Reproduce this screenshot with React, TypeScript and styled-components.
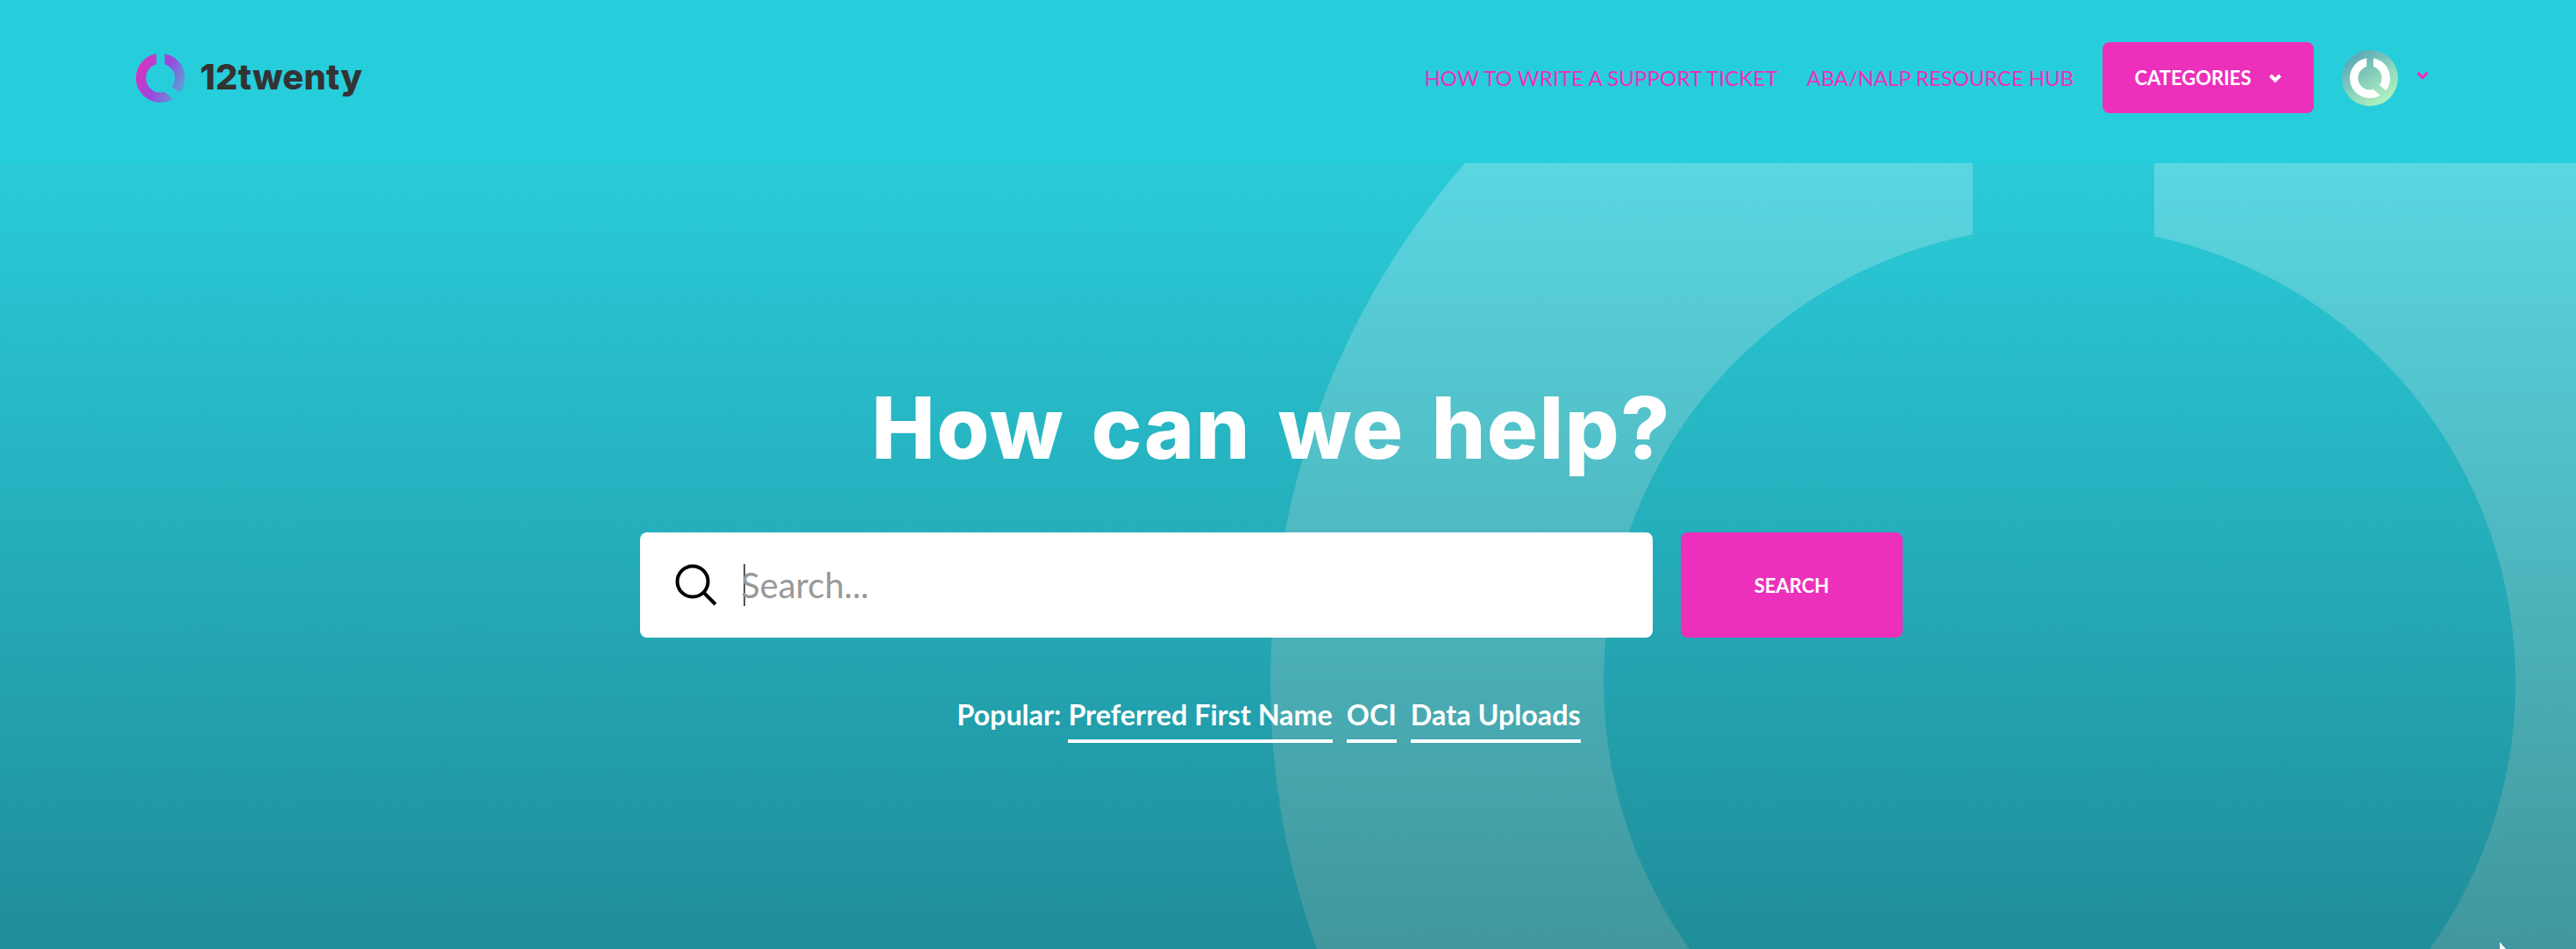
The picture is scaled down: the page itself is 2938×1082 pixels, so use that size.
import { useId } from 'react';
import styled, { createGlobalStyle } from 'styled-components';

const GlobalStyle = createGlobalStyle`
  html, body {
    margin: 0;
    height: 100%;
    overflow: hidden;
    font-family: Lato, "Liberation Sans", sans-serif;
  }
`;

const Page = styled.div`
  display: flex;
  flex-direction: column;
  height: 100vh;
`;

const Header = styled.header`
  display: flex;
  align-items: center;
  justify-content: space-between;
  height: 186px;
  box-sizing: border-box;
  padding: 0 168px 9px 155px;
  background-color: #26cedc;
  flex-shrink: 0;
`;

const Brand = styled.a`
  display: flex;
  align-items: center;
  gap: 17px;
`;

const BrandName = styled.span`
  margin-bottom: 3px;
  font-family: Inter, "Liberation Sans", sans-serif;
  font-size: 40px;
  font-weight: 800;
  letter-spacing: 0.2px;
  color: #333333;
`;

const Nav = styled.nav`
  display: flex;
  align-items: center;
  gap: 33px;
`;

const NavLink = styled.a<{ $tracking: number }>`
  font-size: 24px;
  letter-spacing: ${(p) => p.$tracking}px;
  color: #ec30bc;
  text-transform: uppercase;
  white-space: nowrap;
`;

const CategoriesButton = styled.button`
  display: flex;
  align-items: center;
  justify-content: center;
  gap: 21px;
  width: 241px;
  height: 81px;
  margin-right: -1px;
  border: 0;
  border-radius: 8px;
  background: #ec30bc;
  color: #ffffff;
  font-family: inherit;
  font-size: 22px;
  font-weight: 700;
`;

const UserMenu = styled.div`
  display: flex;
  align-items: center;
  gap: 21px;
`;

const Avatar = styled.div`
  display: flex;
  align-items: center;
  justify-content: center;
  width: 64px;
  height: 64px;
  border-radius: 50%;
  background: linear-gradient(145deg, #4f9fb8 5%, #8fd6bc 55%, #b8f9c0 95%);
`;

const ChevronIcon = styled.svg<{ $lift: number }>`
  width: 14px;
  height: 10px;
  flex-shrink: 0;
  margin-bottom: ${(p) => p.$lift}px;
`;

const Hero = styled.main`
  position: relative;
  flex: 1;
  overflow: hidden;
  display: flex;
  flex-direction: column;
  align-items: center;
  padding: 247px 38px 0 0;
  background: linear-gradient(180deg, #2acbd9 0%, #208d9a 100%);
`;

const Watermark = styled.svg`
  position: absolute;
  left: 1449px;
  top: -308px;
  width: 1800px;
  height: 1800px;
`;

const Title = styled.h1`
  position: relative;
  margin: 0 0 64px;
  font-family: Inter, "Liberation Sans", sans-serif;
  font-size: 97px;
  line-height: 110px;
  font-weight: 800;
  letter-spacing: 1.6px;
  word-spacing: 8px;
  white-space: nowrap;
  color: #ffffff;
`;

const SearchRow = styled.form`
  position: relative;
  display: flex;
  gap: 32px;
  width: 1440px;
  margin: 0;
`;

const SearchBox = styled.label`
  flex: 1;
  display: flex;
  align-items: center;
  height: 120px;
  box-sizing: border-box;
  padding-left: 40px;
  border-radius: 8px;
  background: #ffffff;
`;

const Caret = styled.span`
  width: 2px;
  height: 48px;
  margin: 0 -5px 0 30px;
  background: #555555;
  flex-shrink: 0;
`;

const SearchInput = styled.input`
  flex: 1;
  border: 0;
  outline: 0;
  padding: 0;
  background: transparent;
  font-family: inherit;
  font-size: 40px;
  color: #333333;

  &::placeholder {
    color: #999999;
    opacity: 1;
  }
`;

const SearchButton = styled.button`
  width: 253px;
  border: 0;
  border-radius: 8px;
  background: #ec30bc;
  color: #ffffff;
  font-family: inherit;
  font-size: 22px;
  font-weight: 700;
`;

const Popular = styled.div`
  position: relative;
  display: flex;
  align-items: flex-start;
  gap: 16px;
  margin: 68px 6px 0 0;
  font-size: 32.3px;
  line-height: 40px;
  font-weight: 700;
  color: #ffffff;
`;

const PopularLabel = styled.span`
  margin-right: -8px;
`;

const PopularLink = styled.a`
  padding-bottom: 8px;
  border-bottom: 4px solid #ffffff;
`;

const Pointer = styled.svg`
  position: absolute;
  right: 76px;
  bottom: 0;
  width: 12px;
  height: 8px;
`;

const Chevron = ({ color, width, lift }: { color: string; width: number; lift: number }) => (
  <ChevronIcon $lift={lift} viewBox="0 0 14 10">
    <path d="M1.5 2 7 7.5 12.5 2" fill="none" stroke={color} strokeWidth={width} />
  </ChevronIcon>
);

const LogoMark = ({ size, start, middle, end }: { size: number; start: string; middle: string; end: string }) => {
  const id = useId();
  return (
    <svg width={size} height={size} viewBox="0 0 56 56">
      <defs>
        <linearGradient id={`${id}g`} gradientUnits="userSpaceOnUse" x1="0" y1="14" x2="56" y2="44">
          <stop offset="0" stopColor={start} />
          <stop offset="0.5" stopColor={middle} />
          <stop offset="1" stopColor={end} />
        </linearGradient>
        <mask id={`${id}m`} maskUnits="userSpaceOnUse" x="0" y="0" width="56" height="56">
          <rect width="56" height="56" fill="#fff" />
          <rect x="23.4" y="-1" width="9.4" height="16" fill="#000" />
          <rect x="36" y="36.5" width="26" height="10" fill="#000" transform="rotate(40 38 41)" />
        </mask>
      </defs>
      <circle cx="28" cy="28" r="22.25" fill="none" stroke={`url(#${id}g)`} strokeWidth="11.5" mask={`url(#${id}m)`} />
    </svg>
  );
};

const App = () => (
  <Page>
    <GlobalStyle />
    <Header>
      <Brand>
        <LogoMark size={56} start="#e032bd" middle="#9a48dc" end="#4fb0d6" />
        <BrandName>12twenty</BrandName>
      </Brand>
      <Nav>
        <NavLink $tracking={0.1}>How to write a support ticket</NavLink>
        <NavLink $tracking={-0.1}>ABA/NALP Resource Hub</NavLink>
        <CategoriesButton>
          CATEGORIES
          <Chevron color="#ffffff" width={4} lift={0} />
        </CategoriesButton>
        <UserMenu>
          <Avatar>
            <LogoMark size={46} start="#fff" middle="#fff" end="#fff" />
          </Avatar>
          <Chevron color="#ec30bc" width={3.2} lift={6} />
        </UserMenu>
      </Nav>
    </Header>
    <Hero>
      <Watermark viewBox="0 0 1800 1800">
        <defs>
          <linearGradient id="ringFill" gradientUnits="userSpaceOnUse" x1="0" y1="308" x2="0" y2="1204">
            <stop offset="0" stopColor="#ffffff" stopOpacity="0.23" />
            <stop offset="1" stopColor="#ffd0b0" stopOpacity="0.15" />
          </linearGradient>
          <mask id="ringMask" maskUnits="userSpaceOnUse" x="0" y="0" width="1800" height="1800">
            <rect width="1800" height="1800" fill="#fff" />
            <rect x="801" y="0" width="207" height="420" fill="#000" />
          </mask>
        </defs>
        <circle cx="900" cy="900" r="710" fill="none" stroke="url(#ringFill)" strokeWidth="380" mask="url(#ringMask)" />
      </Watermark>
      <Title>How can we help?</Title>
      <SearchRow>
        <SearchBox>
          <svg width="48" height="48" viewBox="0 0 48 48" fill="none" stroke="#000" strokeWidth="4">
            <circle cx="20" cy="20" r="17.5" />
            <path d="M32.5 32.5 46 46" />
          </svg>
          <Caret />
          <SearchInput placeholder="Search..." />
        </SearchBox>
        <SearchButton type="button">SEARCH</SearchButton>
      </SearchRow>
      <Popular>
        <PopularLabel>Popular:</PopularLabel>
        <PopularLink>Preferred First Name</PopularLink>
        <PopularLink>OCI</PopularLink>
        <PopularLink>Data Uploads</PopularLink>
      </Popular>
      <Pointer viewBox="0 0 12 8">
        <path d="M1 0 1 8 8 8Z" fill="#fff" />
      </Pointer>
    </Hero>
  </Page>
);

export default App;
